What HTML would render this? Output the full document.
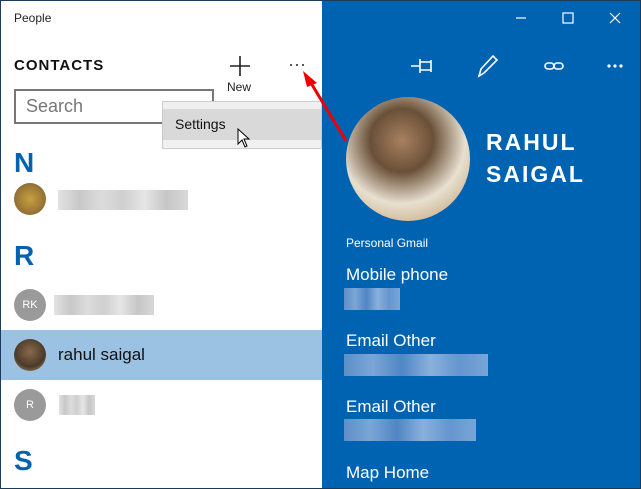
<!DOCTYPE html>
<html><head><style>
*{margin:0;padding:0;box-sizing:border-box}
body{width:641px;height:489px;overflow:hidden;font-family:"Liberation Sans",sans-serif;background:#fff;position:relative}
.frame{position:absolute;left:0;top:0;width:641px;height:489px;border:1px solid #1a3a5a}
.a{position:absolute}
.blue{color:#0063b1}
.w{color:#fff}
.blur{position:absolute;height:20px;background:linear-gradient(90deg,#e2e2e2,#c8c8c8,#dcdcdc,#cfcfcf,#e6e6e6,#c6c6c6,#d8d8d8)}
.bw{position:absolute;height:22px;background:linear-gradient(90deg,#5d8fc8,#7ba6d6,#4f86c4,#8ab0dc,#6496cf,#7aa5d6)}
</style></head><body>
<div class="a" style="left:322px;top:0;width:319px;height:489px;background:#0063b1"></div>
<div class="a" style="left:14px;top:11px;font-size:12px;color:#222">People</div>
<div class="a" style="left:14px;top:57px;font-size:15px;font-weight:bold;letter-spacing:1px;color:#111">CONTACTS</div>
<svg class="a" style="left:229px;top:55px" width="22" height="22"><path d="M11 1V21M1 11H21" stroke="#222" stroke-width="1.6"/></svg>
<div class="a" style="left:227px;top:80px;font-size:12px;color:#222">New</div>
<svg class="a" style="left:288px;top:62px" width="20" height="6"><circle cx="3" cy="3" r="1" fill="#222"/><circle cx="9" cy="3" r="1" fill="#222"/><circle cx="15" cy="3" r="1" fill="#222"/></svg>
<div class="a" style="left:14px;top:89px;width:200px;height:35px;border:2px solid #777"></div>
<div class="a" style="left:26px;top:96px;font-size:18px;color:#777">Search</div>
<div class="a" style="left:162px;top:101px;width:160px;height:48px;background:#f0f0f0;border:1px solid #ccc"></div>
<div class="a" style="left:163px;top:109px;width:158px;height:31px;background:#d9d9d9"></div>
<div class="a" style="left:175px;top:116px;font-size:14px;color:#111">Settings</div>
<svg class="a" style="left:237px;top:128px" width="14" height="20"><path d="M1 1V16L5 12L8 19L10 18L7 11H12Z" fill="#fff" stroke="#000"/></svg>
<svg class="a" style="left:300px;top:70px" width="50" height="75"><path d="M46 71L8 8" stroke="#e00" stroke-width="3"/><path d="M3 1L17 13L7 17Z" fill="#e00"/></svg>
<div class="a blue" style="left:14px;top:147px;font-size:28px;font-weight:bold">N</div>
<div class="a" style="left:14px;top:183px;width:32px;height:32px;border-radius:50%;background:radial-gradient(#c8a040,#7a5a30)"></div>
<div class="blur" style="left:58px;top:190px;width:130px"></div>
<div class="a blue" style="left:14px;top:240px;font-size:28px;font-weight:bold">R</div>
<div class="a" style="left:14px;top:289px;width:32px;height:32px;border-radius:50%;background:#9a9a9a;color:#fff;font-size:11px;text-align:center;line-height:32px">RK</div>
<div class="blur" style="left:54px;top:295px;width:100px"></div>
<div class="a" style="left:1px;top:330px;width:321px;height:50px;background:#9bc2e2"></div>
<div class="a" style="left:14px;top:339px;width:32px;height:32px;border-radius:50%;background:radial-gradient(circle at 50% 40%,#8a6a4a,#4a3a2a 60%,#c0a070)"></div>
<div class="a" style="left:58px;top:345px;font-size:17px;color:#111">rahul saigal</div>
<div class="a" style="left:14px;top:389px;width:32px;height:32px;border-radius:50%;background:#9a9a9a;color:#fff;font-size:11px;text-align:center;line-height:32px">R</div>
<div class="blur" style="left:59px;top:395px;width:36px"></div>
<div class="a blue" style="left:14px;top:445px;font-size:28px;font-weight:bold">S</div>
<svg class="a" style="left:516px;top:10px" width="110" height="16" stroke="#fff" fill="none" stroke-width="1.2"><path d="M0 8H10"/><rect x="47" y="3" width="10" height="10"/><path d="M94 3L104 13M104 3L94 13"/></svg>
<svg class="a" style="left:410px;top:54px" width="220" height="24" stroke="#fff" fill="none" stroke-width="1.6"><path d="M1 12H10M10 5V19M10 8H21V16H10M21 6V18"/><path d="M69 22L71 15L83 2L87 6L74 19Z"/><rect x="135" y="9" width="9" height="6" rx="3"/><rect x="144" y="9" width="9" height="6" rx="3"/><circle cx="199" cy="12" r=".8" fill="#fff"/><circle cx="205" cy="12" r=".8" fill="#fff"/><circle cx="211" cy="12" r=".8" fill="#fff"/></svg>
<div class="a" style="left:346px;top:97px;width:124px;height:124px;border-radius:50%;background:radial-gradient(circle at 45% 35%,#a88060,#6a5038 30%,#e8e0d0 60%,#b89060)"></div>
<div class="a w" style="left:486px;top:126px;font-size:23px;font-weight:bold;letter-spacing:2px;line-height:32px">RAHUL<br>SAIGAL</div>
<div class="a w" style="left:346px;top:236px;font-size:12px">Personal Gmail</div>
<div class="a w" style="left:346px;top:265px;font-size:17px">Mobile phone</div>
<div class="bw" style="left:344px;top:288px;width:56px"></div>
<div class="a w" style="left:346px;top:331px;font-size:17px">Email Other</div>
<div class="bw" style="left:344px;top:354px;width:144px"></div>
<div class="a w" style="left:346px;top:397px;font-size:17px">Email Other</div>
<div class="bw" style="left:344px;top:419px;width:132px"></div>
<div class="a w" style="left:346px;top:463px;font-size:17px">Map Home</div>
<div class="frame"></div>
</body></html>
